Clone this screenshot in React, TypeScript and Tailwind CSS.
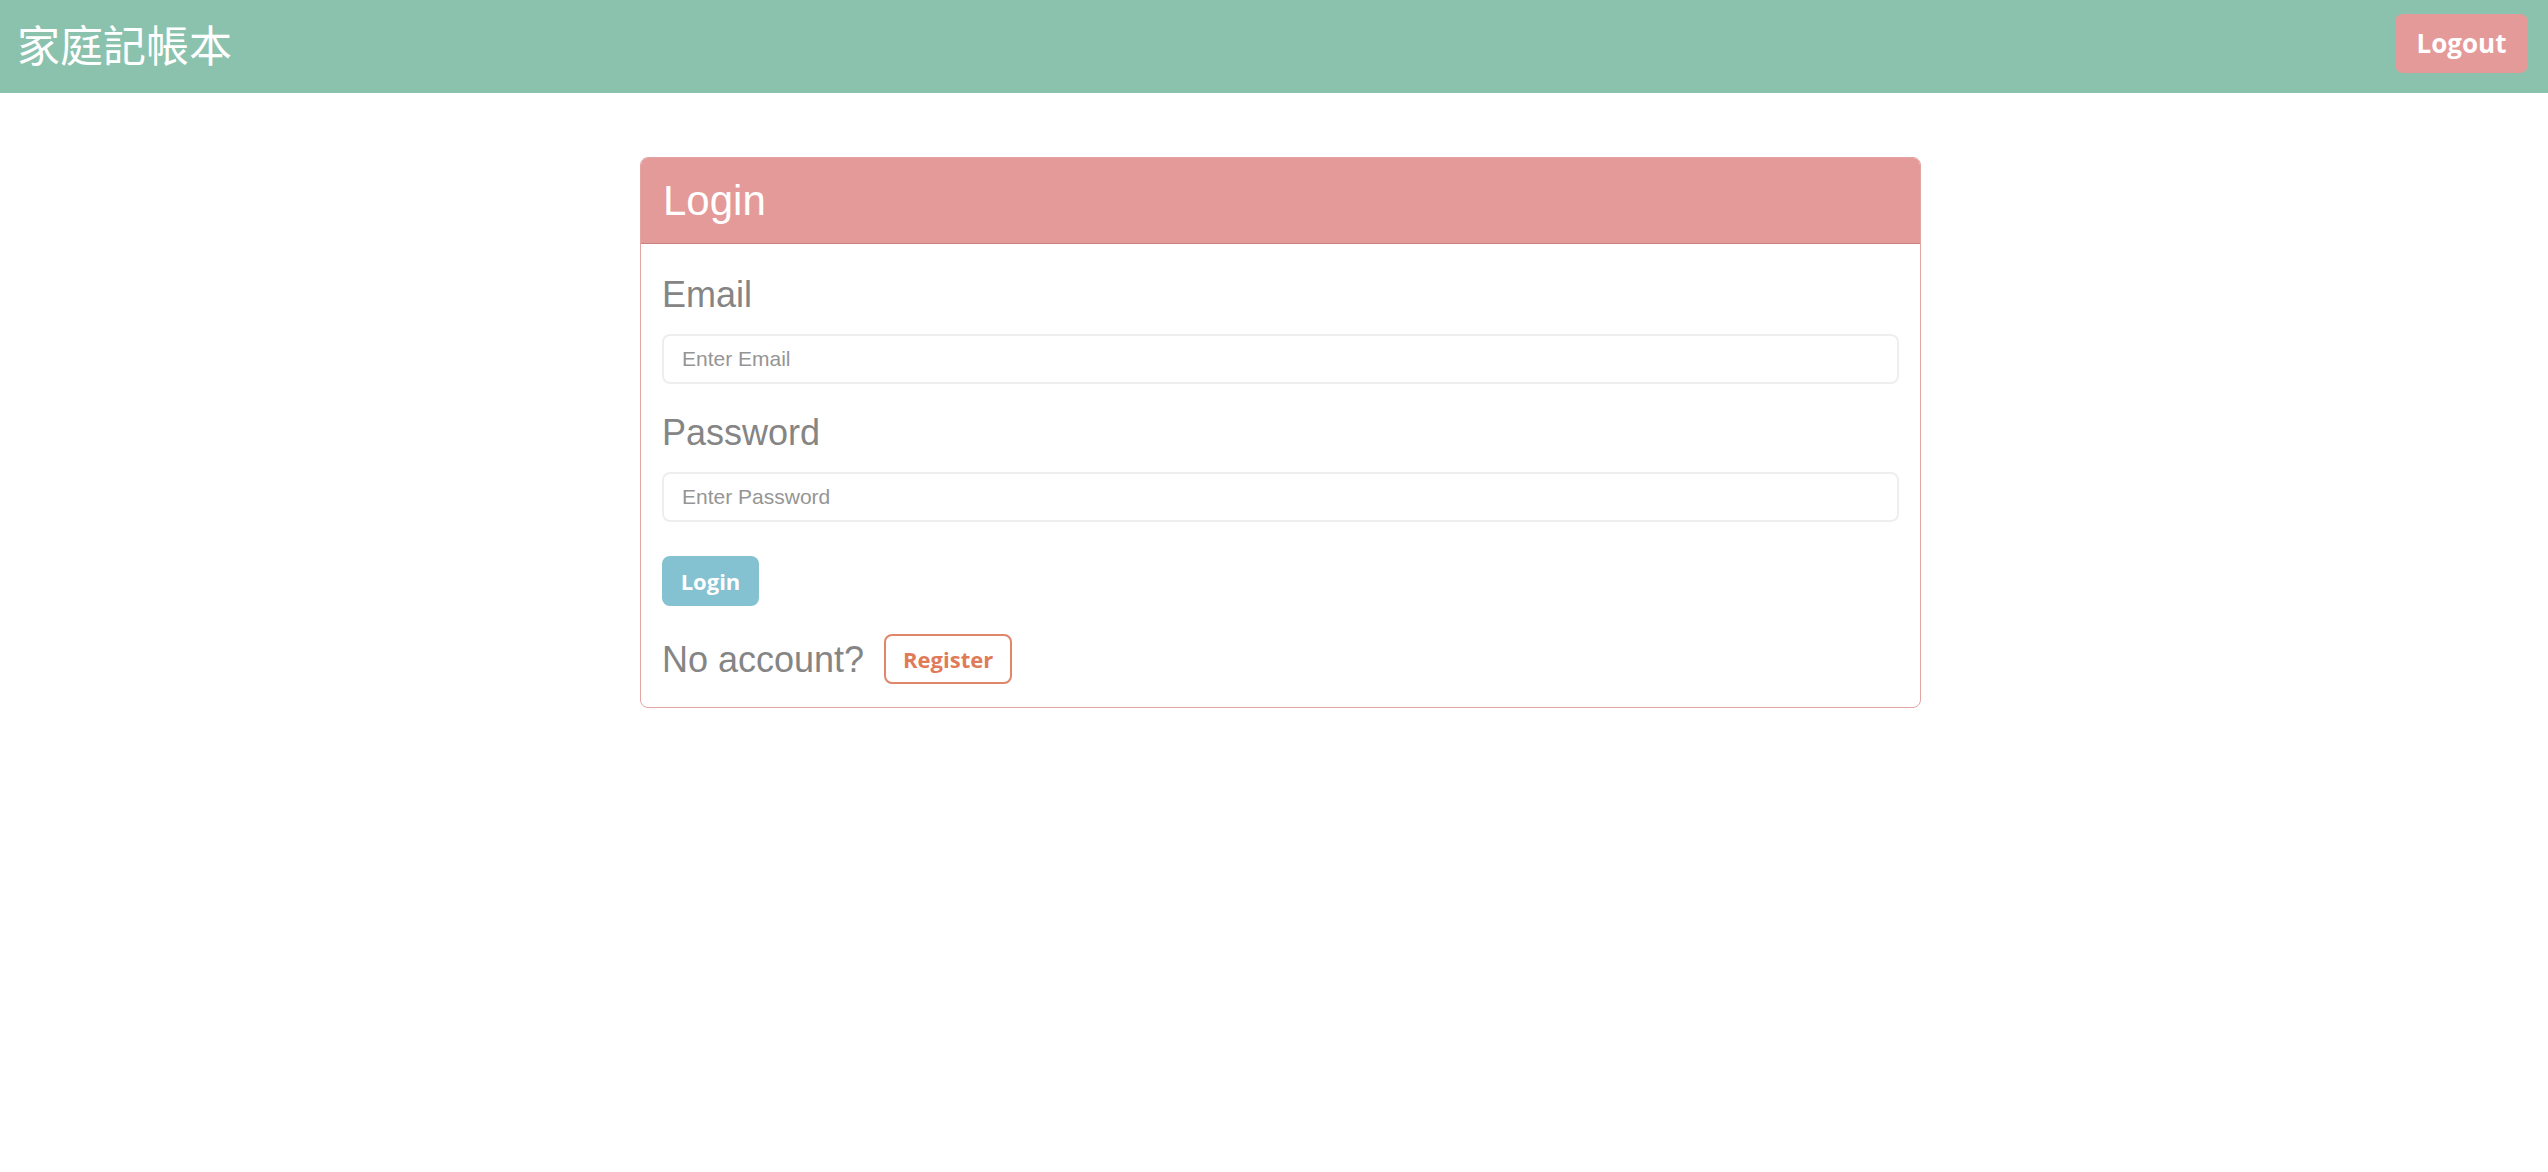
import React from "react";

const App: React.FC = () => {
  return (
    <div className="min-h-screen bg-white font-['Liberation_Sans',Arial,sans-serif]">
      {/* Navbar */}
      <div className="h-[93px] bg-[#8bc2ae] flex items-start justify-between pl-[17px] pr-[20px]">
        <span className="mt-[20px] text-white text-[43px] leading-[46px] font-['Noto_Sans_CJK_TC','Noto_Sans_CJK_SC',sans-serif] font-normal">
          家庭記帳本
        </span>
        <button className="mt-[14px] w-[133px] h-[59px] rounded-[8px] bg-[#e59a9a] text-white text-[26px] font-bold font-['Open_Sans',sans-serif]">
          Logout
        </button>
      </div>

      {/* Login card */}
      <div className="w-[1281px] ml-[640px] mt-[64px] border border-[#e3a4a4] rounded-[8px] overflow-hidden">
        <div className="h-[86px] bg-[#e59a9a] border-b border-[#c98282] flex items-center pl-[22px]">
          <h3 className="text-white text-[42px] leading-none">Login</h3>
        </div>
        <div className="px-[21px] pt-[29px] pb-[23px]">
          <label className="block text-[36px] leading-[43px] text-[#858585] mb-[18px]">Email</label>
          <input
            type="email"
            placeholder="Enter Email"
            className="block w-full h-[50px] border-2 border-[#eeeeee] rounded-[8px] pl-[18px] text-[21px] placeholder:text-[#959595] outline-none mb-[27px]"
          />
          <label className="block text-[36px] leading-[43px] text-[#858585] mb-[18px]">Password</label>
          <input
            type="password"
            placeholder="Enter Password"
            className="block w-full h-[50px] border-2 border-[#eeeeee] rounded-[8px] pl-[18px] text-[21px] placeholder:text-[#959595] outline-none"
          />
          <button className="mt-[34px] w-[97px] h-[50px] rounded-[8px] bg-[#84c1d1] text-white text-[22px] font-bold font-['Open_Sans',sans-serif]">
            Login
          </button>
          <div className="mt-[28px] flex items-center">
            <span className="text-[36px] leading-[43px] text-[#858585]">No account?</span>
            <button className="ml-[20px] w-[128px] h-[50px] rounded-[8px] border-2 border-[#e0866a] text-[#e07b5a] text-[22px] font-bold font-['Open_Sans',sans-serif]">
              Register
            </button>
          </div>
        </div>
      </div>
    </div>
  );
};

export default App;
